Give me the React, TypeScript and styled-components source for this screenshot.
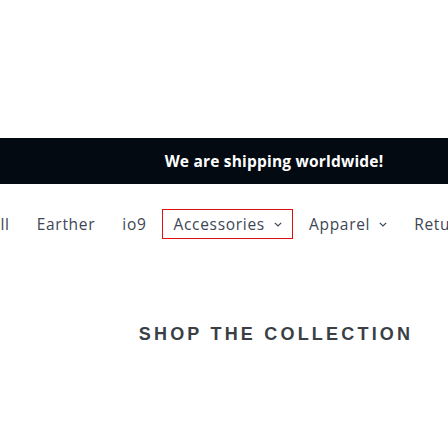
import React from "react";
import styled, { createGlobalStyle } from "styled-components";

const Global = createGlobalStyle`
  html, body { margin: 0; padding: 0; background: #fff; overflow: hidden; }
  body { font-family: "Open Sans", "Liberation Sans", sans-serif; }
`;

const Page = styled.div`
  width: 552px;
  padding-top: 138px;
`;

const Banner = styled.div`
  height: 46px;
  background: #030a12;
  display: flex;
  align-items: center;
  justify-content: center;
  padding-right: 4px;
  color: #fff;
  font-family: "Open Sans", sans-serif;
  font-weight: 700;
  font-size: 15.5px;
  letter-spacing: 0.2px;
`;

const Nav = styled.nav`
  display: flex;
  align-items: center;
  gap: 5px;
  margin: 25px 0 0 -21px;
  white-space: nowrap;
`;

const Item = styled.a<{ $active?: boolean }>`
  display: flex;
  align-items: center;
  gap: 9px;
  padding: 5px 10px 4px;
  border: 1px solid ${(p) => (p.$active ? "#e01010" : "transparent")};
  color: #3d4655;
  font-size: 15.5px;
  line-height: 19px;
  letter-spacing: 0.7px;
  text-decoration: none;
`;

const Heading = styled.h2`
  margin: 85px 0 0;
  text-align: center;
  font-family: "Liberation Sans", Arial, sans-serif;
  font-weight: 700;
  font-size: 18px;
  letter-spacing: 3.2px;
  color: #3a3f46;
`;

const Chevron = () => (
  <svg width="8" height="5" viewBox="0 0 8 5" fill="none">
    <polyline points="0.8,0.8 4,4 7.2,0.8" stroke="#3d4655" strokeWidth="1.2" />
  </svg>
);

export default function App() {
  const items: { label: string; menu?: boolean; active?: boolean }[] = [
    { label: "All" },
    { label: "Earther" },
    { label: "io9" },
    { label: "Accessories", menu: true, active: true },
    { label: "Apparel", menu: true },
    { label: "Returns" },
  ];
  return (
    <Page>
      <Global />
      <Banner>We are shipping worldwide!</Banner>
      <Nav>
        {items.map((it) => (
          <Item key={it.label} $active={it.active}>
            {it.label}
            {it.menu && <Chevron />}
          </Item>
        ))}
      </Nav>
      <Heading>SHOP THE COLLECTION</Heading>
    </Page>
  );
}
